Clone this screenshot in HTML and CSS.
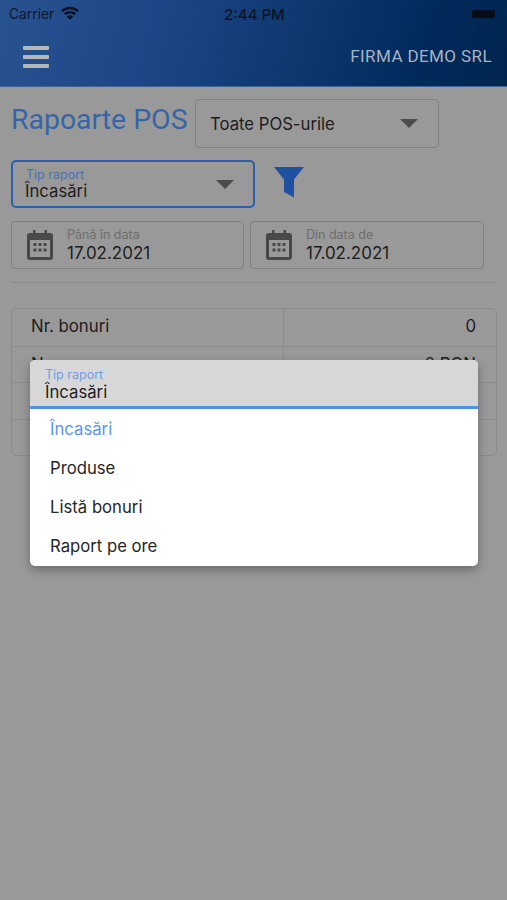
FILE: index.html
```html
<!DOCTYPE html>
<html lang="ro">
<head>
<meta charset="utf-8">
<title>Rapoarte POS</title>
<link rel="stylesheet" href="styles.css">
</head>
<body>
<div class="app">
  <header class="top">
    <div class="status">
      <div class="status-left">
        <span>Carrier</span>
        <svg class="wifi" width="18" height="13" viewBox="0 0 18 13"><path d="M9 13 5.900 9.600a4.600 4.600 0 0 1 6.200 0z M4.600 8.200 2.900 6.300a9.200 9.200 0 0 1 12.200 0l-1.700 1.900a6.600 6.600 0 0 0-8.800 0z M1.600 5 0 3.200a13.500 13.500 0 0 1 18 0L16.400 5A11.200 11.200 0 0 0 1.600 5z" fill="#0a1428"/></svg>
      </div>
      <span class="clock">2:44 PM</span>
      <span class="battery"></span>
    </div>
    <div class="bar">
      <div class="burger"><i></i><i></i><i></i></div>
      <span class="company">FIRMA DEMO SRL</span>
    </div>
  </header>
  <main class="content">
    <div class="row-title">
      <h1 class="title">Rapoarte POS</h1>
      <div class="field pos-select">
        <span class="value pos-value">Toate POS-urile</span>
        <span class="caret"></span>
      </div>
    </div>
    <div class="row-type">
      <div class="field type-select">
        <div class="stack">
          <span class="label label-blue">Tip raport</span>
          <span class="value">Încasări</span>
        </div>
        <span class="caret"></span>
      </div>
      <svg class="filter" width="30" height="31" viewBox="0 0 30 31"><path d="M0 0H30L20 12.500V30.500L10 25V12.500z" fill="#1e519f"/></svg>
    </div>
    <div class="row-dates">
      <div class="field date">
        <svg class="cal" width="26" height="30" viewBox="0 0 26 30"><path d="M6 0h2.500v3h9V0H20v3h3a3 3 0 0 1 3 3v21a3 3 0 0 1-3 3H3a3 3 0 0 1-3-3V6a3 3 0 0 1 3-3h3z M3 10v17h20V10z M6.500 13h3v3h-3z M11.500 13h3v3h-3z M16.500 13h3v3h-3z M6.500 18.500h3v3h-3z M11.500 18.500h3v3h-3z M16.500 18.500h3v3h-3z" fill="#484848" fill-rule="evenodd"/></svg>
        <div class="stack">
          <span class="label">Până în data</span>
          <span class="value date-value">17.02.2021</span>
        </div>
      </div>
      <div class="field date">
        <svg class="cal" width="26" height="30" viewBox="0 0 26 30"><path d="M6 0h2.500v3h9V0H20v3h3a3 3 0 0 1 3 3v21a3 3 0 0 1-3 3H3a3 3 0 0 1-3-3V6a3 3 0 0 1 3-3h3z M3 10v17h20V10z M6.500 13h3v3h-3z M11.500 13h3v3h-3z M16.500 13h3v3h-3z M6.500 18.500h3v3h-3z M11.500 18.500h3v3h-3z M16.500 18.500h3v3h-3z" fill="#484848" fill-rule="evenodd"/></svg>
        <div class="stack">
          <span class="label">Din data de</span>
          <span class="value date-value">17.02.2021</span>
        </div>
      </div>
    </div>
    <hr class="divider">
    <div class="table">
      <div class="tr"><span class="td">Nr. bonuri</span><span class="td num">0</span></div>
      <div class="tr"><span class="td">Numerar</span><span class="td num">0 RON</span></div>
      <div class="tr"><span class="td"></span><span class="td num"></span></div>
      <div class="tr"><span class="td"></span><span class="td num"></span></div>
    </div>
  </main>
  <div class="menu">
    <div class="menu-head">
      <span class="label label-light">Tip raport</span>
      <span class="value menu-value">Încasări</span>
    </div>
    <ul class="options">
      <li class="option selected">Încasări</li>
      <li class="option">Produse</li>
      <li class="option">Listă bonuri</li>
      <li class="option">Raport pe ore</li>
    </ul>
  </div>
</div>
</body>
</html>
```
FILE: styles.css
```css
* { box-sizing: border-box; }
html, body { margin: 0; padding: 0; }
body {
  width: 507px;
  height: 900px;
  overflow: hidden;
  background: #999999;
  font-family: Inter, Roboto, "Liberation Sans", sans-serif;
  color: #1d1d1d;
}
.app { position: relative; width: 507px; height: 900px; }

.top {
  height: 87px;
  background: linear-gradient(105deg, #28528f 0%, #1d4688 30%, #0e3870 58%, #012a5c 82%, #00254f 100%);
  border-bottom: 1px solid #3f6393;
}
.status {
  height: 28px;
  padding: 0 12px 0 9px;
  display: flex;
  align-items: center;
  justify-content: space-between;
  font-size: 13.800px;
  color: #0c1830;
  position: relative;
}
.status-left { display: flex; align-items: center; gap: 7px; }
.wifi { margin-top: -1px; }
.clock {
  position: absolute;
  left: 224px;
  font-size: 15px;
  font-weight: 500;
  color: #0b1525;
}
.battery { width: 23px; height: 8px; background: #070d18; border-radius: 2px; }
.bar {
  height: 58px;
  padding: 0 15px 0 23px;
  display: flex;
  align-items: center;
  justify-content: space-between;
}
.burger { display: flex; flex-direction: column; gap: 5px; margin-top: -1px; }
.burger i { display: block; width: 26px; height: 4px; background: #b5b8b8; border-radius: 1px; }
.company {
  font-size: 17px;
  color: #a7b3c2;
  letter-spacing: 0.4px;
  font-family: Roboto, sans-serif;
  margin-top: -3px;
}

.content { padding: 12px 10px 0 11px; }
.row-title { display: flex; align-items: center; gap: 8px; }
.title {
  margin: -9px 0 0;
  font-family: Roboto, sans-serif;
  font-weight: 400;
  font-size: 28.400px;
  color: #3465a8;
  width: 176px;
  white-space: nowrap;
}
.field {
  border: 1px solid #808080;
  border-radius: 4px;
  display: flex;
  align-items: center;
}
.pos-select {
  width: 244px;
  height: 49px;
  padding: 0 20px 0 14px;
  justify-content: space-between;
}
.value { font-size: 16.700px; color: #1d1d1d; line-height: 19px; }
.pos-value { padding-top: 2px; }
.menu-value { padding-top: 1px; }
.caret {
  width: 0;
  height: 0;
  border-left: 9px solid transparent;
  border-right: 9px solid transparent;
  border-top: 9px solid #4c4c4c;
}
.row-type { display: flex; align-items: center; gap: 19px; margin-top: 12px; }
.type-select {
  width: 244px;
  height: 48px;
  border: 2px solid #2c60ae;
  border-radius: 5px;
  padding: 0 19px 0 12px;
  justify-content: space-between;
}
.stack { display: flex; flex-direction: column; }
.label { font-size: 12.500px; line-height: 14px; color: #6e6e6e; }
.label-blue { color: #4572b4; margin-left: 1px; }
.label-light { color: #6a9fe8; }
.filter { margin-top: -3px; }

.row-dates { display: flex; gap: 6px; margin-top: 13px; }
.date {
  width: 233px;
  height: 48px;
  padding: 0 0 0 15px;
  gap: 14px;
}
.date + .date { width: 234px; }
.cal { flex: none; }
.date-value { font-size: 17px; line-height: 20px; padding-top: 1px; }

.divider { margin: 13px 0 25px; border: 0; border-top: 1px solid #8a8a8a; width: 486px; height: 1px; }

.table {
  width: 486px;
  height: 148px;
  border: 1px solid #8b8b8b;
  border-radius: 5px;
  display: grid;
  grid-template-rows: repeat(4, 1fr);
}
.tr { display: grid; grid-template-columns: 271px 1fr; border-top: 1px solid #8b8b8b; }
.tr:first-child { border-top: 0; }
.td { padding: 7px 20px 7px 19px; font-size: 16.800px; line-height: 20px; }
.num { border-left: 1px solid #8b8b8b; text-align: right; }

.menu {
  position: absolute;
  left: 30px;
  top: 360px;
  width: 448px;
  height: 206px;
  background: #ffffff;
  border-radius: 5px;
  box-shadow: 0 4px 10px rgba(0, 0, 0, 0.3);
  overflow: hidden;
}
.menu-head {
  height: 49px;
  background: #d8d7d7;
  border-bottom: 3px solid #4f90e8;
  padding: 8px 15px 0;
  display: flex;
  flex-direction: column;
}
.options { list-style: none; margin: 0; padding: 1px 0 0 20px; }
.option { height: 39px; line-height: 39px; font-size: 16.700px; color: #262626; }
.selected { color: #5b95e8; }
```
